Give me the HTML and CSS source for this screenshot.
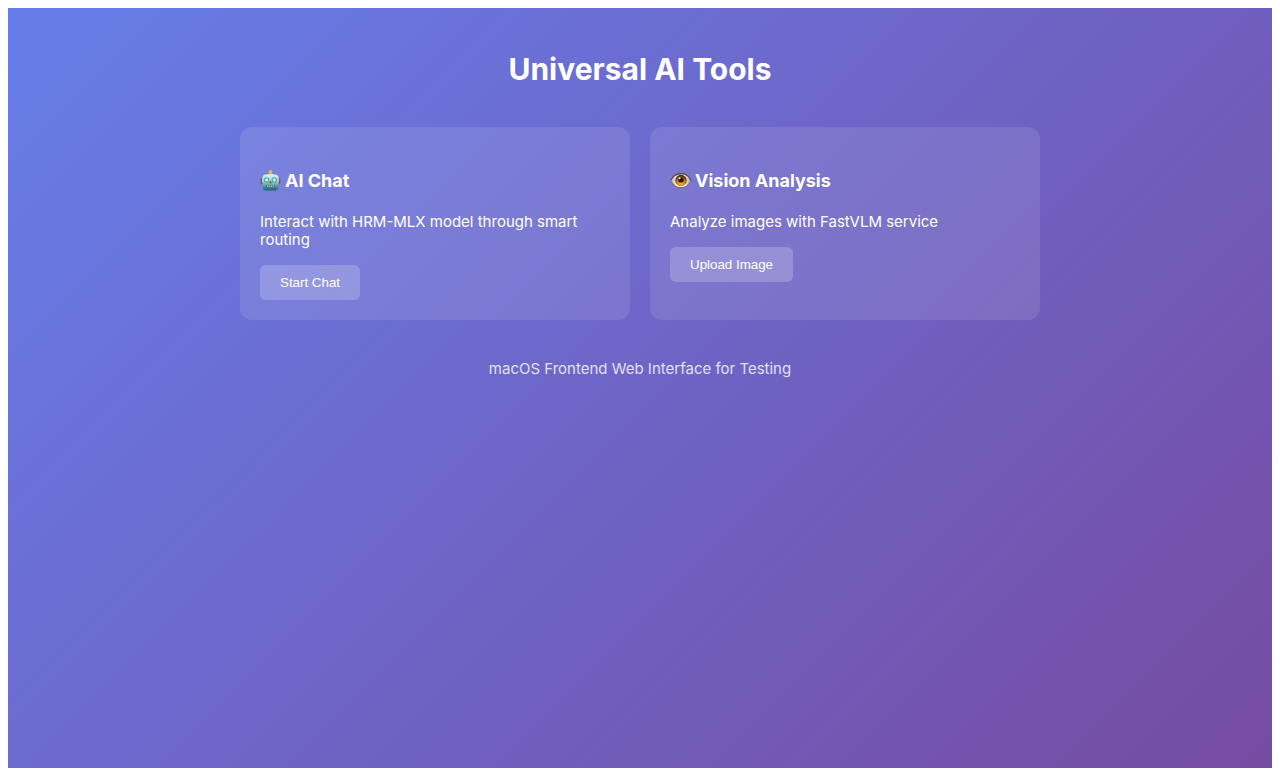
FILE: index.html
```html
<!DOCTYPE html>
<html lang="en">
<head>
<meta charset="utf-8">
<meta name="viewport" content="width=device-width, initial-scale=1">
<title>Universal AI Tools</title>
<link rel="stylesheet" href="styles.css">
</head>
<body>
<div class="page">
  <main class="container">
    <h1 class="title">Universal AI Tools</h1>
    <div class="cards">
      <section class="card">
        <h3 class="card-title">
          <svg class="emoji" viewBox="0 0 22 22" aria-hidden="true">
            <defs>
              <linearGradient id="head" x1="0" y1="0" x2="0" y2="1">
                <stop offset="0" stop-color="#e2f4ef"/><stop offset=".45" stop-color="#a3d3d0"/><stop offset=".75" stop-color="#4f979f"/><stop offset="1" stop-color="#1f5f6b"/>
              </linearGradient>
            </defs>
            <rect x="9.5" y="2" width="2" height="3" fill="#b97835"/>
            <circle cx="10.500" cy="2" r="2" fill="#f3b72f"/>
            <rect x=".6" y="8" width="3" height="6" rx="1.300" fill="#a93f52"/>
            <rect x="17.400" y="8" width="3" height="6" rx="1.300" fill="#a93f52"/>
            <path d="M4.500 4.800Q10.500 3 16.500 4.800Q19.200 6 19 11L18.200 18Q17.900 20.400 15.500 20.400H5.500Q3.100 20.400 2.800 18L2 11Q1.800 6 4.500 4.800Z" fill="url(#head)"/>
            <circle cx="6.600" cy="10" r="2.800" fill="#2db5c4"/><circle cx="14.400" cy="10" r="2.800" fill="#2db5c4"/>
            <circle cx="6.600" cy="10" r="1.400" fill="#e8fffb"/><circle cx="14.400" cy="10" r="1.400" fill="#e8fffb"/>
            <path d="M10.500 10.400L12.100 13.200H8.900Z" fill="#d8393f"/>
            <rect x="6" y="15" width="9" height="2.400" rx="1" fill="#37707a"/>
            <path d="M7 16.200H14" stroke="#e5c9bd" stroke-width="1.200" stroke-dasharray="1.300 .6"/>
          </svg>
          <span>AI Chat</span>
        </h3>
        <p class="card-text">Interact with HRM-MLX model through smart routing</p>
        <button class="button" type="button">Start Chat</button>
      </section>
      <section class="card">
        <h3 class="card-title">
          <svg class="emoji" viewBox="0 0 22 22" aria-hidden="true">
            <defs>
              <radialGradient id="iris" cx=".5" cy=".7" r=".6">
                <stop offset="0" stop-color="#ffc51c"/><stop offset=".6" stop-color="#c07b12"/><stop offset="1" stop-color="#573014"/>
              </radialGradient>
              <linearGradient id="white" x1="0" x2="1">
                <stop offset="0" stop-color="#b8a5a2"/><stop offset=".3" stop-color="#fff"/><stop offset=".75" stop-color="#f5f1ef"/><stop offset="1" stop-color="#a58c91"/>
              </linearGradient>
            </defs>
            <path d="M.4 10.700Q4 2.600 11 2.500Q18 2.500 21.400 10.700Q17.500 18.500 11 18.500Q4 18.500 .4 10.700Z" fill="#806d79"/>
            <path d="M1 10.400Q5 4.600 11 4.500Q17.500 4.500 20.700 10.400Q17 17.100 11 17.100Q5 17.100 1 10.400Z" fill="url(#white)"/>
            <circle cx="11" cy="10.500" r="5.800" fill="url(#iris)"/>
            <circle cx="11" cy="9.900" r="2.700" fill="#24120b"/>
            <circle cx="9.600" cy="8.200" r="1" fill="#fff"/>
            <path d="M.8 10.200Q4.500 3.500 11 3.500T20.900 10.200" fill="none" stroke="#5d4a56" stroke-width="1.200"/>
          </svg>
          <span>Vision Analysis</span>
        </h3>
        <p class="card-text">Analyze images with FastVLM service</p>
        <button class="button" type="button">Upload Image</button>
      </section>
    </div>
    <p class="footer">macOS Frontend Web Interface for Testing</p>
  </main>
</div>
</body>
</html>
```

FILE: styles.css
```css
* {
  box-sizing: border-box;
}

body {
  margin: 8px;
  background: #fff;
  color: #fff;
  font-family: Inter, "Liberation Sans", sans-serif;
  font-size: 15px;
  line-height: 18px;
}

.page {
  min-height: calc(100vh - 16px);
  padding: 40px 20px;
  background: linear-gradient(135deg, #667eea 0%, #764ba2 100%);
}

.container {
  max-width: 800px;
  margin: 0 auto;
}

.title {
  margin: 0 0 36px;
  font-size: 30px;
  line-height: 43px;
  text-align: center;
}

.cards {
  display: grid;
  grid-template-columns: repeat(auto-fit, minmax(300px, 1fr));
  gap: 20px;
}

.card {
  padding: 40px 20px 20px;
  border-radius: 12px;
  background: rgba(255, 255, 255, 0.1);
}

.card-title {
  display: flex;
  align-items: center;
  gap: 3px;
  margin: 0 0 18px;
  font-size: 18px;
  line-height: 28px;
}

.emoji {
  width: 22px;
  height: 22px;
}

.card-text {
  margin: 0 0 16px;
}

.button {
  height: 35px;
  padding: 0 20px;
  border: 0;
  border-radius: 6px;
  background: rgba(255, 255, 255, 0.2);
  color: #fff;
  font-family: "Liberation Sans", Arial, sans-serif;
  cursor: pointer;
}

.footer {
  margin: 40px 0 0;
  text-align: center;
  opacity: 0.8;
}
```
